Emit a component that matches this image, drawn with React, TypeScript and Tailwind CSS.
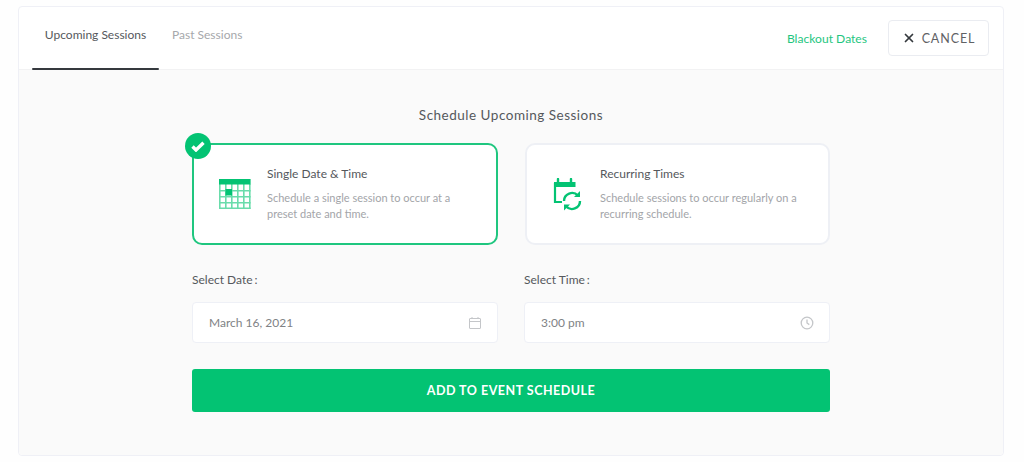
import React from "react"
import { X } from "lucide-react"

function GridCalendarIcon() {
  const cols = [0, 6, 12, 18, 24, 30]
  const rows = [11, 17, 23, 28.500]
  return (
    <svg width="32" height="30" viewBox="0 0 32 30" fill="none">
      {cols.map((c) => (
        <rect key={c} x={c} y="5" width="1.600" height="25" fill="#6adcab" />
      ))}
      {rows.map((r) => (
        <rect key={r} x="0" y={r} width="31.600" height="1.500" fill="#6adcab" />
      ))}
      <rect x="0" y="0" width="31.600" height="5.500" fill="#03c373" />
      <rect x="6.500" y="10" width="6.500" height="6.500" fill="#03c373" />
    </svg>
  )
}

function RecurringIcon() {
  return (
    <svg width="29" height="33" viewBox="0 0 29 33" fill="none">
      <path d="M1 4h21.500v5H1z" fill="#03c373" />
      <path d="M5 1v4M18 1v4" stroke="#03c373" strokeWidth="2.400" strokeLinecap="round" />
      <path d="M2 5v19h7" stroke="#03c373" strokeWidth="2.200" />
      <path d="M11 23a8 8 0 0 1 14-5.300" stroke="#03c373" strokeWidth="2.400" />
      <path d="M27 13v6h-6z" fill="#03c373" />
      <path d="M27 23a8 8 0 0 1-14 5.300" stroke="#03c373" strokeWidth="2.400" />
      <path d="M11 32.500v-6h6z" fill="#03c373" />
    </svg>
  )
}

function SmallCalendar() {
  return (
    <svg width="12" height="12" viewBox="0 0 12 12" fill="none" stroke="#c4c6c9" strokeWidth="1">
      <rect x="0.500" y="1.500" width="11" height="10" rx="0.500" />
      <path d="M0.500 4.500h11M3 0v2M9 0v2" />
    </svg>
  )
}

function SmallClock() {
  return (
    <svg className="-mr-[1px]" width="14" height="14" viewBox="0 0 14 14" fill="none" stroke="#c4c6c9" strokeWidth="1.300">
      <circle cx="7" cy="7" r="5.800" />
      <path d="M7 3.500V7l2.300 1.600" />
    </svg>
  )
}

function OptionCard({ icon, title, text, selected }: { icon: React.ReactNode; title: string; text: React.ReactNode; selected?: boolean }) {
  return (
    <div
      className={
        selected
          ? "relative flex h-[102px] items-center rounded-[10px] border-2 border-[#1fc67f] bg-white"
          : "relative ml-[1px] flex h-[102px] items-center rounded-[10px] border-2 border-[#eef0f5] bg-white"
      }
    >
      <div className="flex w-[73px] shrink-0 justify-center pl-[8px]">{icon}</div>
      <div>
        <p className="text-[12px] leading-[16px] text-[#55585c]">{title}</p>
        <p className="mt-[8px] text-[11px] leading-[16px] text-[#a3a5a9]">{text}</p>
      </div>
      {selected && (
        <div className="absolute left-[-9px] top-[-12px] flex h-[26px] w-[26px] items-center justify-center rounded-full bg-[#03c373]">
          <svg width="14" height="11" viewBox="0 0 14 11" fill="none">
            <path d="M1.500 5.500l3.500 3.500L12.500 1.800" stroke="#fff" strokeWidth="3.400" />
          </svg>
        </div>
      )}
    </div>
  )
}

function Field({ label, value, icon }: { label: string; value: string; icon: React.ReactNode }) {
  return (
    <div>
      <p className="text-[12px] leading-[16px] text-[#55585c]">
        {label}
        <span className="ml-[2px]">:</span>
      </p>
      <div className="mt-[14px] flex h-[41px] items-center justify-between rounded-[4px] border border-[#eef0f6] bg-white px-[16px]">
        <span className="text-[12px] text-[#808285]">{value}</span>
        {icon}
      </div>
    </div>
  )
}

export default function App() {
  return (
    <div className="h-[462px] overflow-hidden bg-[#fefefe] pl-[18px] pr-[20px] pt-[6px] font-['Lato',sans-serif]">
      <div className="h-[450px] rounded-[4px] border border-[#eff0f6] bg-white">
        {/* header */}
        <div className="flex h-[63px] items-stretch justify-between border-b border-[#f2f2f3]">
          <div className="flex pl-[13px]">
            <div className="relative w-[127px] pt-[20px] text-center text-[12px] leading-[16px] text-[#55585c]">
              Upcoming Sessions
              <div className="absolute bottom-[-1px] left-0 h-[2px] w-full rounded-full bg-[#35393e]"></div>
            </div>
            <div className="pl-[13px] pt-[20px] text-[12px] leading-[16px] text-[#a6a8ab]">Past Sessions</div>
          </div>
          <div className="flex items-center pr-[14px]">
            <span className="mt-[3px] text-[12.100px] text-[#1fc67f]">Blackout Dates</span>
            <div className="ml-[21px] flex h-[36px] w-[101px] items-center justify-center rounded-[4px] border border-[#eaecf1] bg-white pt-[2px] text-[12.500px] tracking-[0.9px] text-[#5f6265]">
              <X size={14} strokeWidth={3} className="mb-[2px] mr-[6px] text-[#35393e]" />
              CANCEL
            </div>
          </div>
        </div>
        {/* body */}
        <div className="h-[385px] rounded-b-[4px] bg-[#fafafa] pt-[36px]">
          <div className="ml-[173px] w-[638px]">
            <h2 className="text-center text-[13.500px] leading-[18px] tracking-[0.5px] text-[#55585c]">Schedule Upcoming Sessions</h2>
            <div className="mt-[19px] grid grid-cols-2 gap-x-[26px]">
              <OptionCard
                selected
                icon={<GridCalendarIcon />}
                title="Single Date & Time"
                text={<>Schedule a single session to occur at a<br />preset date and time.</>}
              />
              <OptionCard
                icon={<RecurringIcon />}
                title="Recurring Times"
                text={<>Schedule sessions to occur regularly on a<br />recurring schedule.</>}
              />
              <div className="mt-[27px]">
                <Field label="Select Date" value="March 16, 2021" icon={<SmallCalendar />} />
              </div>
              <div className="mt-[27px]">
                <Field label="Select Time" value="3:00 pm" icon={<SmallClock />} />
              </div>
            </div>
            <button className="mt-[26px] h-[43px] w-full rounded-[3px] bg-[#03c373] pt-[1px] text-[12.500px] font-bold tracking-[0.5px] text-white">
              ADD TO EVENT SCHEDULE
            </button>
          </div>
        </div>
      </div>
    </div>
  )
}
